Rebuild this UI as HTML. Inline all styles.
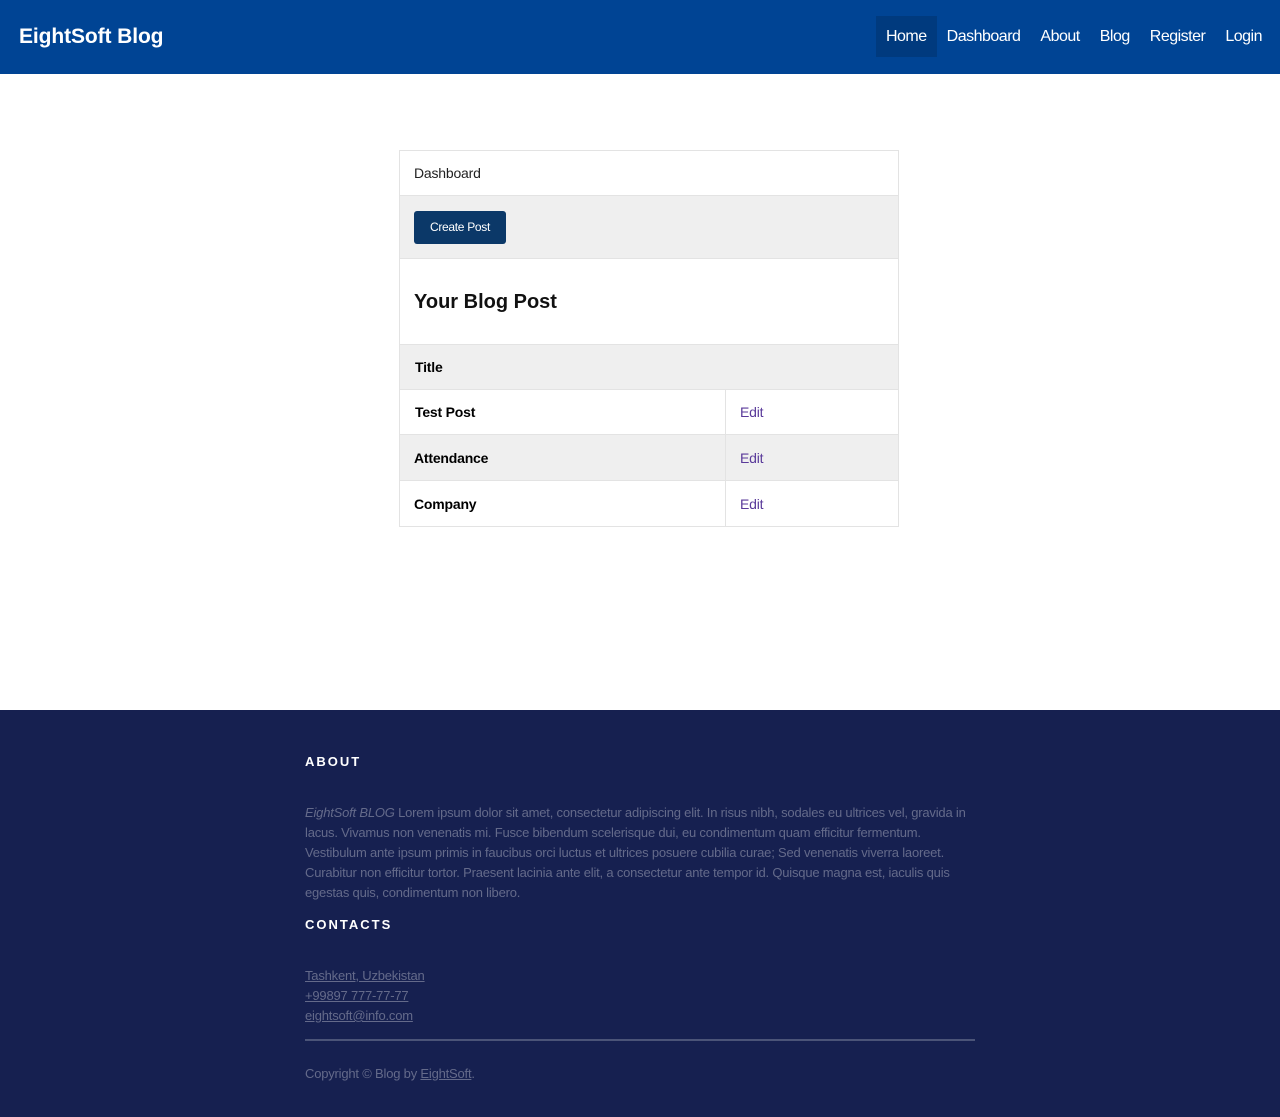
<!DOCTYPE html>
<html><head><meta charset="utf-8"><style>
*{box-sizing:border-box;margin:0;padding:0}
body{width:1280px;height:1117px;font-family:"Liberation Sans",Arial,sans-serif;background:#fff;position:relative;overflow:hidden}
.nav{position:absolute;left:0;top:0;width:1280px;height:74px;background:#004494}
.brand{position:absolute;left:19px;top:25px;color:#fff;font-weight:bold;font-size:21px;letter-spacing:-0.1px}
.links{position:absolute;right:8px;top:16px;display:flex}
.links a{color:#fff;text-decoration:none;font-size:16px;letter-spacing:-0.5px;height:41px;line-height:42px;padding:0 10px}
.links a.active{background:#003a7e}
.card{position:absolute;left:399px;top:150px;width:500px;border:1px solid #e3e3e3}
.row{border-bottom:1px solid #e3e3e3;position:relative}
.row:last-child{border-bottom:none}
.g{background:#efefef}
.btn{position:absolute;left:14px;top:15px;width:92px;height:33px;background:#0b3868;color:#fff;border-radius:3px;font-size:12px;letter-spacing:-0.3px;text-align:center;line-height:33px}
.td{position:absolute;top:0;height:100%;display:flex;align-items:center;font-size:14px;letter-spacing:-0.2px}
.edit{left:325px;border-left:1px solid #e3e3e3;padding-left:14px;color:#5a3a9a;width:173px}
.foot{position:absolute;left:0;top:710px;width:1280px;height:407px;background:#162050;color:#646a8a}
.foot h4{position:absolute;left:305px;color:#fff;font-size:13px;letter-spacing:2px}
.foot p{position:absolute;left:305px;width:672px;font-size:13px;letter-spacing:-0.2px;line-height:20px}
.foot a{color:#646a8a}
</style></head><body>
<div class="nav"><div class="brand">EightSoft Blog</div>
<div class="links"><a class="active">Home</a><a>Dashboard</a><a>About</a><a>Blog</a><a>Register</a><a>Login</a></div></div>
<div class="card">
<div class="row" style="height:45px"><div class="td" style="left:14px;color:#222">Dashboard</div></div>
<div class="row g" style="height:63px"><div class="btn">Create Post</div></div>
<div class="row" style="height:86px"><div class="td" style="left:14px;font-size:20px;font-weight:bold;color:#111;letter-spacing:0;padding-top:2px">Your Blog Post</div></div>
<div class="row g" style="height:45px"><div class="td" style="left:15px;font-weight:bold">Title</div></div>
<div class="row" style="height:45px"><div class="td" style="left:15px;font-weight:bold">Test Post</div><div class="td edit">Edit</div></div>
<div class="row g" style="height:46px"><div class="td" style="left:14px;font-weight:bold">Attendance</div><div class="td edit">Edit</div></div>
<div class="row" style="height:45px"><div class="td" style="left:14px;font-weight:bold">Company</div><div class="td edit">Edit</div></div>
</div>
<div class="foot">
<h4 style="top:44px">ABOUT</h4>
<p style="top:93px"><i>EightSoft BLOG</i> Lorem ipsum dolor sit amet, consectetur adipiscing elit. In risus nibh, sodales eu ultrices vel, gravida in lacus. Vivamus non venenatis mi. Fusce bibendum scelerisque dui, eu condimentum quam efficitur fermentum.<br>Vestibulum ante ipsum primis in faucibus orci luctus et ultrices posuere cubilia curae; Sed venenatis viverra laoreet.<br>Curabitur non efficitur tortor. Praesent lacinia ante elit, a consectetur ante tempor id. Quisque magna est, iaculis quis<br>egestas quis, condimentum non libero.</p>
<h4 style="top:207px">CONTACTS</h4>
<p style="top:256px"><a href="#">Tashkent, Uzbekistan</a><br><a href="#">+99897 777-77-77</a><br><a href="#">eightsoft@info.com</a></p>
<div style="position:absolute;left:305px;top:329px;width:670px;height:2px;background:#4b5478"></div>
<p style="top:354px">Copyright © Blog by <a href="#">EightSoft</a>.</p>
</div>
</body></html>
